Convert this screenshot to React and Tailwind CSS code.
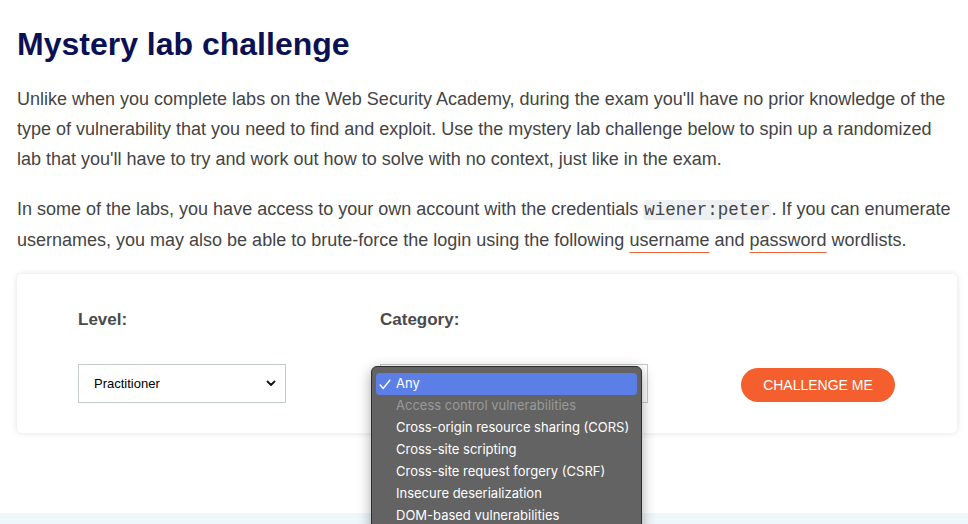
import React from "react";

const categories = [
  { label: "Access control vulnerabilities", disabled: true },
  { label: "Cross-origin resource sharing (CORS)" },
  { label: "Cross-site scripting" },
  { label: "Cross-site request forgery (CSRF)" },
  { label: "Insecure deserialization" },
  { label: "DOM-based vulnerabilities" },
];

function Chevron() {
  return (
    <svg width="10" height="7" viewBox="0 0 10 7" className="shrink-0">
      <path d="M1.5 1.5 L5 5 L8.5 1.5" fill="none" stroke="#111" strokeWidth="1.8" strokeLinecap="round" strokeLinejoin="round" />
    </svg>
  );
}

function Check() {
  return (
    <svg width="12" height="11" viewBox="0 0 12 11" className="shrink-0">
      <path d="M1.2 6 L4.3 9.4 L10.8 1.2" fill="none" stroke="#fff" strokeWidth="1.5" strokeLinecap="round" strokeLinejoin="round" />
    </svg>
  );
}

export default function App() {
  return (
    <div className="relative h-[524px] overflow-hidden bg-white font-['Liberation_Sans',Arial,sans-serif]">
      <div className="px-[17px] pt-[24px]">
        <h1 className="text-[32px] leading-[40px] font-bold text-[#0b1153] mb-[20px]">Mystery lab challenge</h1>

        <p className="text-[18px] leading-[30px] text-[#444] mb-[20px]">
          Unlike when you complete labs on the Web Security Academy, during the exam you'll have no prior knowledge of the
          type of vulnerability that you need to find and exploit. Use the mystery lab challenge below to spin up a randomized
          lab that you'll have to try and work out how to solve with no context, just like in the exam.
        </p>

        <p className="text-[18px] leading-[30px] text-[#444]">
          In some of the labs, you have access to your own account with the credentials{" "}
          <code className="font-['Liberation_Mono',monospace] text-[17.5px] bg-[#eef1f3] rounded-[4px] px-[1px]">wiener:peter</code>. If you can enumerate
          usernames, you may also be able to brute-force the login using the following{" "}
          <a className="underline decoration-[#e8643a] decoration-1 underline-offset-[6px]">username</a> and{" "}
          <a className="underline decoration-[#e8643a] decoration-1 underline-offset-[6px]">password</a> wordlists.
        </p>

        <div className="mt-[19px] mr-[-6px] h-[159px] rounded-[5px] bg-white shadow-[0_0_6px_rgba(0,0,0,0.12)] pl-[61px] pt-[35px] flex">
          <div className="w-[302px]">
            <div className="text-[17px] font-bold text-[#4a4a4a] leading-[22px]">Level:</div>
            <div className="mt-[33px] w-[208px] h-[39px] border border-[#c5cacd] bg-white flex items-center justify-between pl-[15px] pr-[9px] text-[13px] text-black">
              <span>Practitioner</span>
              <Chevron />
            </div>
          </div>
          <div className="w-[361px]">
            <div className="text-[17px] font-bold text-[#4a4a4a] leading-[22px]">Category:</div>
            <div className="relative mt-[33px] w-[268px] h-[39px] border border-[#c5cacd] bg-white flex items-center justify-end pr-[9px]">
              <Chevron />
            </div>
          </div>
          <div className="pt-[59px]">
            <button className="h-[34px] w-[154px] rounded-full bg-[#f55f2e] text-white text-[14px] leading-none">CHALLENGE ME</button>
          </div>
        </div>
      </div>

      <div className="mt-[80px] h-[20px] bg-[#f0f7fa]"></div>

      <div className="absolute left-[371px] top-[366px] w-[271px] h-[170px] rounded-[6px] border border-[#2e2e2e] bg-[#636363] shadow-[0_4px_14px_rgba(0,0,0,0.35)] px-[4px] pt-[6px] font-['Inter','Noto_Sans',sans-serif] text-[13px]">
        <div className="h-[22px] rounded-[4px] bg-[#5b7fe6] text-white flex items-center pl-[3px] gap-[5px]">
          <Check />
          <span>Any</span>
        </div>
        {categories.map((c) => (
          <div
            key={c.label}
            className={"h-[22px] flex items-center pl-[20px] " + (c.disabled ? "text-[#9a9a9a]" : "text-white")}
          >
            {c.label}
          </div>
        ))}
      </div>
    </div>
  );
}
